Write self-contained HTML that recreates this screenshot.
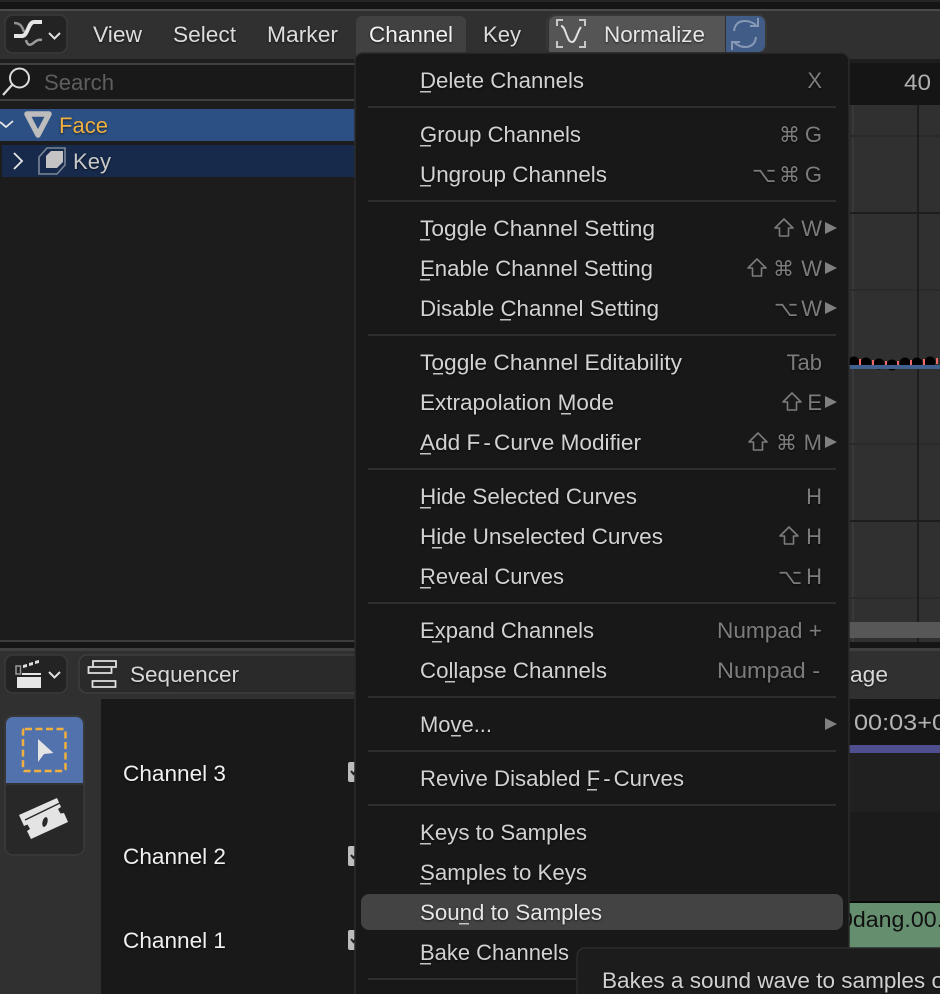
<!DOCTYPE html>
<html><head><meta charset="utf-8"><style>
html,body{margin:0;padding:0;background:#1a1a1a;width:940px;height:994px;overflow:hidden}
svg{display:block}
text{font-family:"Liberation Sans","DejaVu Sans",sans-serif;font-size:22px}
.m{fill:#d2d2d2}.s{fill:#7c7c7c}.h{fill:#dcdcdc}
.k{font-family:"DejaVu Sans",sans-serif;font-size:21px;fill:#7c7c7c}
.sh{filter:drop-shadow(0 1px 1px rgba(0,0,0,.6))}
</style></head><body>
<svg width="940" height="994" viewBox="0 0 940 994" xmlns="http://www.w3.org/2000/svg">
<rect width="940" height="994" fill="#1a1a1a"/>
<!-- top strip -->
<rect width="940" height="2" y="0" fill="#262626"/>
<rect y="2" width="940" height="7" fill="#151515"/>
<rect y="11" width="940" height="48" fill="#303030"/>
<rect y="9" width="940" height="2" fill="#4a4a4a"/>
<rect y="59" width="940" height="4" fill="#1e1e1e"/>
<!-- graph editor header -->
<rect x="5" y="15" width="62" height="38" rx="8" fill="#232323" stroke="#3a3a3a" stroke-width="1.500"/>
<path d="M14 23c5 0 8 2 10 9" fill="none" stroke="#909090" stroke-width="2.500"/>
<path d="M26 40c1 4 3 6 6 4s5-5 10-4" fill="none" stroke="#9c9c9c" stroke-width="2.500"/>
<path d="M14 36h8c6 0 6-14 12-14h8" fill="none" stroke="#e6e6e6" stroke-width="4"/>
<path d="M49 33l5.500 5.500 5.500-5.500" fill="none" stroke="#e0e0e0" stroke-width="2"/>
<g class="sh">
<text x="93" y="42" class="h" textLength="49" lengthAdjust="spacingAndGlyphs">View</text>
<text x="173" y="42" class="h" textLength="63" lengthAdjust="spacingAndGlyphs">Select</text>
<text x="267" y="42" class="h" textLength="71" lengthAdjust="spacingAndGlyphs">Marker</text>
</g>
<rect x="356" y="16" width="110" height="46" rx="6" fill="#414141"/>
<g class="sh">
<text x="369" y="42" fill="#f2f2f2" textLength="84" lengthAdjust="spacingAndGlyphs">Channel</text>
<text x="483" y="42" class="h" textLength="38" lengthAdjust="spacingAndGlyphs">Key</text>
</g>
<rect x="547" y="15" width="219" height="38" rx="8" fill="none" stroke="#3a3a3a" stroke-width="1.500"/>
<path d="M556 16h169v36h-176v-29a7 7 0 0 1 7-7z" fill="#555"/>
<path d="M557 26v-6h6M579 20h6v6M557 41v6h6M579 47h6v-6" fill="none" stroke="#c8c8c8" stroke-width="2"/>
<path d="M561 26c3 0 4 5 6 10s3 6 5 6c4 0 5-10 9-15" fill="none" stroke="#e0e0e0" stroke-width="2"/>
<text class="sh" x="604" y="42" fill="#e6e6e6" textLength="101" lengthAdjust="spacingAndGlyphs">Normalize</text>
<path d="M726 16h32a7 7 0 0 1 7 7v22a7 7 0 0 1-7 7h-32z" fill="#425c88"/>
<path d="M734 31c1-8 6-10 11-10 5 0 8 2 11 4M756 37c-1 8-6 10-11 10-5 0-8-2-11-5" fill="none" stroke="#8799b5" stroke-width="2"/>
<path d="M758 18v8h-8M732 50v-8h8" fill="none" stroke="#8799b5" stroke-width="2"/>
<!-- left channel panel -->
<rect y="63" width="355" height="577" fill="#1c1c1c"/>
<rect y="63" width="355" height="2" fill="#404040"/>
<rect y="65" width="355" height="34" fill="#191919"/>
<rect y="99" width="355" height="2" fill="#404040"/>
<circle cx="19.500" cy="78" r="9.500" fill="none" stroke="#dcdcdc" stroke-width="2"/>
<path d="M12 85l-9 10" stroke="#dcdcdc" stroke-width="2.200" fill="none"/>
<text x="44" y="90" fill="#5e5e5e" textLength="70" lengthAdjust="spacingAndGlyphs">Search</text>
<rect y="109" width="355" height="32" fill="#2c5083"/>
<path d="M0 122l6 5 7-6" fill="none" stroke="#e6e6e6" stroke-width="1.800"/>
<path d="M27 114h22l-11 21z" fill="none" stroke="#bdbdbd" stroke-width="5.500" stroke-linejoin="round"/>
<text class="sh" x="59" y="133" fill="#f0b040" textLength="49" lengthAdjust="spacingAndGlyphs">Face</text>
<rect x="2" y="145" width="353" height="32" fill="#172a4c"/>
<path d="M14 153l8 8-8 8" fill="none" stroke="#e6e6e6" stroke-width="1.800"/>
<path d="M47 148h18v17l-8 9h-18v-17z" fill="none" stroke="#7c8796" stroke-width="1.600"/>
<path d="M51 151h12v11l-6 6h-11v-12z" fill="#c4c4c4"/>
<text class="sh" x="73" y="169" fill="#c8c8c8" textLength="38" lengthAdjust="spacingAndGlyphs">Key</text>
<!-- graph area -->
<rect x="849" y="63" width="91" height="44" fill="#151515"/>
<text x="904" y="90" fill="#b0b0b0" textLength="27" lengthAdjust="spacingAndGlyphs">40</text>
<rect x="849" y="105" width="91" height="537" fill="#303030"/>
<rect x="852" y="105" width="2" height="537" fill="#383838"/>
<g fill="#2a2a2a"><rect x="849" y="135" width="91" height="2"/><rect x="849" y="289" width="91" height="2"/><rect x="849" y="443" width="91" height="2"/><rect x="849" y="597" width="91" height="2"/></g>
<g fill="#1d1d1d"><rect x="849" y="212" width="91" height="2"/><rect x="849" y="520" width="91" height="2"/><rect x="917" y="105" width="2" height="537"/></g>
<g fill="#000"><circle cx="854" cy="362" r="5.500"/><circle cx="866" cy="363" r="5.500"/><circle cx="879" cy="364" r="5.500"/><circle cx="892" cy="365" r="5.500"/><circle cx="905" cy="363" r="5.500"/><circle cx="917" cy="363" r="5.500"/><circle cx="930" cy="362" r="5.500"/></g>
<g fill="#ee6a6a"><rect x="859" y="359" width="2" height="6"/><rect x="872" y="360" width="2" height="5"/><rect x="885" y="361" width="2" height="4"/><rect x="897" y="361" width="2" height="4"/><rect x="910" y="360" width="2" height="5"/><rect x="923" y="359" width="2" height="6"/><rect x="936" y="358" width="2" height="6"/></g>
<rect x="849" y="365" width="91" height="4" fill="#40608f"/>
<rect x="849" y="622" width="91" height="16" fill="#575757"/>
<!-- divider -->
<rect y="640" width="850" height="2" fill="#3c3c3c"/>
<rect y="642" width="940" height="6" fill="#151515"/>
<!-- bottom editor -->
<rect y="648" width="940" height="51" fill="#303030"/>
<rect y="648" width="940" height="3" fill="#3f3f3f"/>
<rect y="699" width="101" height="295" fill="#303030"/>
<rect x="101" y="699" width="839" height="295" fill="#191919"/>
<rect x="5" y="655" width="62" height="38" rx="8" fill="#232323" stroke="#3a3a3a" stroke-width="1.500"/>
<path d="M17 677h24v11h-24z" fill="#e6e6e6"/>
<rect x="22" y="673" width="19" height="2" fill="#e6e6e6"/>
<rect x="16" y="666" width="4.500" height="8" fill="none" stroke="#9a9a9a" stroke-width="1.500"/>
<path d="M23 665l4-1v3l-4 1zM29 663l4-1v3l-4 1zM35 661l4-1v3l-4 1z" fill="#e0e0e0"/>
<path d="M49 672l5.500 5.500 5.500-5.500" fill="none" stroke="#e0e0e0" stroke-width="2"/>
<rect x="79" y="655" width="290" height="38" rx="8" fill="#2a2a2a" stroke="#3e3e3e" stroke-width="1.500"/>
<path d="M93 661h23v6h-23zM88.500 667h23v6h-23zM92.500 681h23v6h-23z" fill="none" stroke="#e0e0e0" stroke-width="1.800"/>
<text class="sh" x="130" y="682" fill="#d8d8d8" textLength="109" lengthAdjust="spacingAndGlyphs">Sequencer</text>
<rect x="5" y="716" width="79" height="139" rx="8" fill="#282828" stroke="#3a3a3a" stroke-width="1.500"/>
<path d="M6 783v-59a7 7 0 0 1 7-7h63a7 7 0 0 1 7 7v59z" fill="#5272ad"/>
<rect x="6" y="783" width="77" height="2" fill="#333"/>
<rect x="23" y="729" width="42.500" height="42" rx="2" fill="none" stroke="#f0b040" stroke-width="2.500" stroke-dasharray="7 3.500"/>
<path d="M38 739l15.500 14-9.500 1-6 8z" fill="#e4e4e4"/>
<path d="M19 815L57 798L61 807L58 809L60.500 813.500L64 813L68 822L31 839L27 831L30 829L27.500 824.500L24 826Z" fill="#e4e4e4"/>
<ellipse cx="45" cy="822" rx="2.500" ry="5" fill="#282828" transform="rotate(15 45 822)"/>
<path d="M25 820l35-17" stroke="#282828" stroke-width="1.500"/>
<g class="sh">
<text x="123" y="781" fill="#f0f0f0" textLength="103" lengthAdjust="spacingAndGlyphs">Channel 3</text>
<text x="123" y="864" fill="#f0f0f0" textLength="103" lengthAdjust="spacingAndGlyphs">Channel 2</text>
<text x="123" y="948" fill="#f0f0f0" textLength="103" lengthAdjust="spacingAndGlyphs">Channel 1</text>
</g>
<g fill="#bdbdbd"><rect x="348" y="762" width="8" height="20" rx="2"/><rect x="348" y="846" width="8" height="20" rx="2"/><rect x="348" y="930" width="8" height="20" rx="2"/></g>
<path d="M351 771l2.500 3 3-4M351 855l2.500 3 3-4M351 939l2.500 3 3-4" fill="none" stroke="#222" stroke-width="2"/>
<text class="sh" x="850" y="682" fill="#d8d8d8" textLength="38" lengthAdjust="spacingAndGlyphs">age</text>
<rect x="849" y="699" width="91" height="46" fill="#151515"/>
<text x="854" y="730" fill="#b4b4b4" textLength="92" lengthAdjust="spacingAndGlyphs">00:03+0</text>
<rect x="849" y="745" width="91" height="8" fill="#4f4f8f"/>
<rect x="849" y="753" width="91" height="59" fill="#202020"/>
<rect x="849" y="812" width="91" height="89" fill="#1b1b1b"/>
<rect x="849" y="901" width="91" height="2" fill="#0a0a0a"/>
<rect x="849" y="903" width="91" height="46" fill="#658e6f"/>
<text x="840" y="927" fill="#101010" textLength="103" lengthAdjust="spacingAndGlyphs">0dang.00.</text>
<!-- menu -->
<rect x="355" y="53" width="494" height="960" rx="8" fill="#181818" stroke="#2b2b2b" stroke-width="1.500"/>
<g fill="#2e2e2e"><rect x="368" y="106" width="468" height="2"/><rect x="368" y="200" width="468" height="2"/><rect x="368" y="334" width="468" height="2"/><rect x="368" y="468" width="468" height="2"/><rect x="368" y="602" width="468" height="2"/><rect x="368" y="696" width="468" height="2"/><rect x="368" y="750" width="468" height="2"/><rect x="368" y="804" width="468" height="2"/><rect x="368" y="978" width="468" height="2"/></g>
<rect x="361" y="894" width="482" height="36" rx="8" fill="#434343"/>
<g class="sh">
<text class="m" x="420" y="88" textLength="164" lengthAdjust="spacingAndGlyphs">Delete Channels</text>
<text class="m" x="420" y="142" textLength="161" lengthAdjust="spacingAndGlyphs">Group Channels</text>
<text class="m" x="420" y="182" textLength="187" lengthAdjust="spacingAndGlyphs">Ungroup Channels</text>
<text class="m" x="420" y="236" textLength="235" lengthAdjust="spacingAndGlyphs">Toggle Channel Setting</text>
<text class="m" x="420" y="276" textLength="233" lengthAdjust="spacingAndGlyphs">Enable Channel Setting</text>
<text class="m" x="420" y="316" textLength="239" lengthAdjust="spacingAndGlyphs">Disable Channel Setting</text>
<text class="m" x="420" y="370" textLength="262" lengthAdjust="spacingAndGlyphs">Toggle Channel Editability</text>
<text class="m" x="420" y="410" textLength="194" lengthAdjust="spacingAndGlyphs">Extrapolation Mode</text>
<text class="m" x="420" y="450" textLength="221" lengthAdjust="spacingAndGlyphs">Add F<tspan dx="3">-</tspan><tspan dx="3">Curve Modifier</tspan></text>
<text class="m" x="420" y="504" textLength="217" lengthAdjust="spacingAndGlyphs">Hide Selected Curves</text>
<text class="m" x="420" y="544" textLength="243" lengthAdjust="spacingAndGlyphs">Hide Unselected Curves</text>
<text class="m" x="420" y="584" textLength="144" lengthAdjust="spacingAndGlyphs">Reveal Curves</text>
<text class="m" x="420" y="638" textLength="174" lengthAdjust="spacingAndGlyphs">Expand Channels</text>
<text class="m" x="420" y="678" textLength="187" lengthAdjust="spacingAndGlyphs">Collapse Channels</text>
<text class="m" x="420" y="732" textLength="72" lengthAdjust="spacingAndGlyphs">Move...</text>
<text class="m" x="420" y="786" textLength="264" lengthAdjust="spacingAndGlyphs">Revive Disabled F<tspan dx="3">-</tspan><tspan dx="3">Curves</tspan></text>
<text class="m" x="420" y="840" textLength="167" lengthAdjust="spacingAndGlyphs">Keys to Samples</text>
<text class="m" x="420" y="880" textLength="167" lengthAdjust="spacingAndGlyphs">Samples to Keys</text>
<text fill="#e6e6e6" x="420" y="920" textLength="182" lengthAdjust="spacingAndGlyphs">Sound to Samples</text>
<text class="m" x="420" y="960" textLength="149" lengthAdjust="spacingAndGlyphs">Bake Channels</text>
</g>
<!-- mnemonic underlines -->
<g fill="#c4c4c4">
<rect x="420" y="91" width="11" height="1.500"/><rect x="420" y="145" width="11" height="1.500"/><rect x="420" y="185" width="11" height="1.500"/>
<rect x="420" y="239" width="10" height="1.500"/><rect x="420" y="279" width="10" height="1.500"/><rect x="500" y="319" width="11" height="1.500"/>
<rect x="433" y="373" width="10" height="1.500"/><rect x="561" y="413" width="10" height="1.500"/><rect x="420" y="453" width="11" height="1.500"/>
<rect x="420" y="507" width="11" height="1.500"/><rect x="432" y="547" width="10" height="1.500"/><rect x="420" y="587" width="11" height="1.500"/>
<rect x="432" y="641" width="10" height="1.500"/><rect x="445" y="681" width="10" height="1.500"/><rect x="451" y="735" width="10" height="1.500"/>
<rect x="587" y="789" width="10" height="1.500"/><rect x="420" y="843" width="11" height="1.500"/><rect x="420" y="883" width="11" height="1.500"/>
<rect x="459" y="923" width="10" height="1.500"/><rect x="420" y="963" width="11" height="1.500"/>
</g>
<!-- shortcuts -->
<g class="sh">
<text class="s" x="822" y="88" text-anchor="end">X</text>
<text class="k" x="779" y="142">⌘</text><text class="s" x="822" y="142" text-anchor="end">G</text>
<text class="k" x="752" y="182">⌥</text><text class="k" x="779" y="182">⌘</text><text class="s" x="822" y="182" text-anchor="end">G</text>
<text class="s" x="822" y="236" text-anchor="end">W</text>
<text class="k" x="773" y="276">⌘</text><text class="s" x="822" y="276" text-anchor="end">W</text>
<text class="k" x="774" y="316">⌥</text><text class="s" x="822" y="316" text-anchor="end">W</text>
<text class="s" x="822" y="370" text-anchor="end">Tab</text>
<text class="s" x="822" y="410" text-anchor="end">E</text>
<text class="k" x="776" y="450">⌘</text><text class="s" x="822" y="450" text-anchor="end">M</text>
<text class="s" x="822" y="504" text-anchor="end">H</text>
<text class="s" x="822" y="544" text-anchor="end">H</text>
<text class="k" x="778" y="584">⌥</text><text class="s" x="822" y="584" text-anchor="end">H</text>
<text class="s" x="717" y="638" textLength="105" lengthAdjust="spacingAndGlyphs">Numpad +</text>
<text class="s" x="717" y="678" textLength="103" lengthAdjust="spacingAndGlyphs">Numpad -</text>
</g>
<!-- shift icons -->
<g fill="none" stroke="#7c7c7c" stroke-width="1.600" stroke-linejoin="round">
<path d="M784 219l9 9h-4.500v8h-9v-8h-4.500z"/>
<path d="M757 259l9 9h-4.500v8h-9v-8h-4.500z"/>
<path d="M792 393l9 9h-4.500v8h-9v-8h-4.500z"/>
<path d="M758 433l9 9h-4.500v8h-9v-8h-4.500z"/>
<path d="M789 527l9 9h-4.500v8h-9v-8h-4.500z"/>
</g>
<g fill="#808080">
<path d="M825 222l12 6-12 6zM825 262l12 6-12 6zM825 302l12 6-12 6zM825 396l12 6-12 6zM825 436l12 6-12 6zM825 718l12 6-12 6z"/>
</g>
<!-- tooltip -->
<rect x="577" y="948" width="380" height="70" rx="8" fill="#1c1c1c" stroke="#2b2b2b" stroke-width="1.500"/>
<text class="sh" x="602" y="988" fill="#d0d0d0" textLength="342" lengthAdjust="spacingAndGlyphs">Bakes a sound wave to samples o</text>
</svg>
</body></html>
